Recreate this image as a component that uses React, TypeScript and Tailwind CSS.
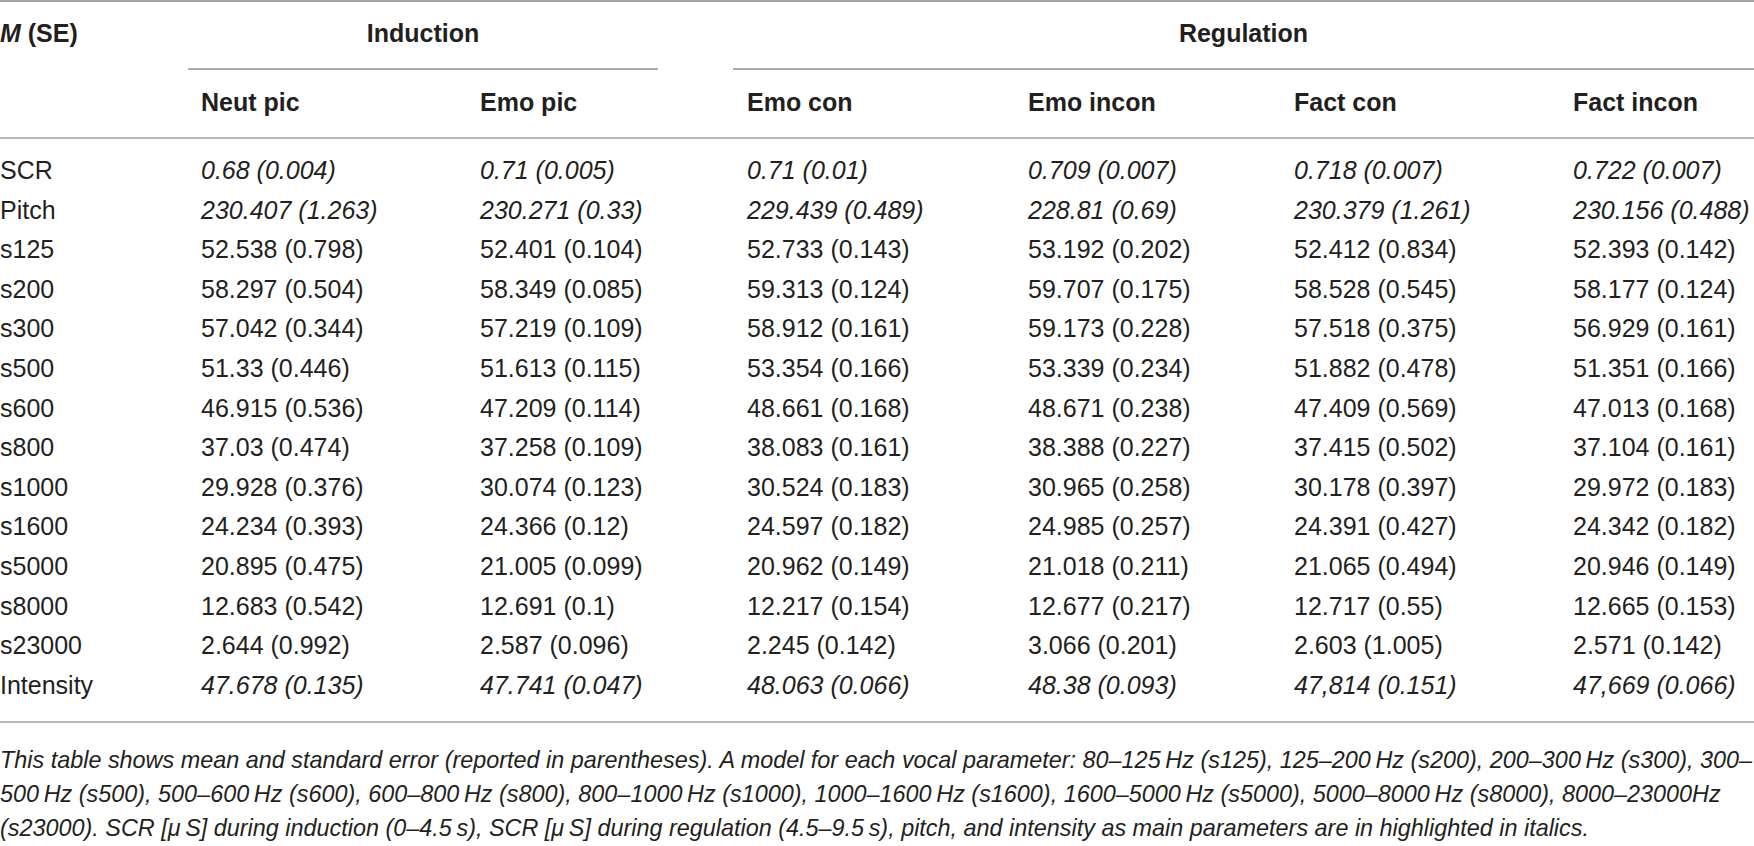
import React from 'react';

type Row = { label: string; italic?: boolean; values: string[] };

const rows: Row[] = [
  { label: 'SCR', italic: true, values: ['0.68 (0.004)', '0.71 (0.005)', '0.71 (0.01)', '0.709 (0.007)', '0.718 (0.007)', '0.722 (0.007)'] },
  { label: 'Pitch', italic: true, values: ['230.407 (1.263)', '230.271 (0.33)', '229.439 (0.489)', '228.81 (0.69)', '230.379 (1.261)', '230.156 (0.488)'] },
  { label: 's125', values: ['52.538 (0.798)', '52.401 (0.104)', '52.733 (0.143)', '53.192 (0.202)', '52.412 (0.834)', '52.393 (0.142)'] },
  { label: 's200', values: ['58.297 (0.504)', '58.349 (0.085)', '59.313 (0.124)', '59.707 (0.175)', '58.528 (0.545)', '58.177 (0.124)'] },
  { label: 's300', values: ['57.042 (0.344)', '57.219 (0.109)', '58.912 (0.161)', '59.173 (0.228)', '57.518 (0.375)', '56.929 (0.161)'] },
  { label: 's500', values: ['51.33 (0.446)', '51.613 (0.115)', '53.354 (0.166)', '53.339 (0.234)', '51.882 (0.478)', '51.351 (0.166)'] },
  { label: 's600', values: ['46.915 (0.536)', '47.209 (0.114)', '48.661 (0.168)', '48.671 (0.238)', '47.409 (0.569)', '47.013 (0.168)'] },
  { label: 's800', values: ['37.03 (0.474)', '37.258 (0.109)', '38.083 (0.161)', '38.388 (0.227)', '37.415 (0.502)', '37.104 (0.161)'] },
  { label: 's1000', values: ['29.928 (0.376)', '30.074 (0.123)', '30.524 (0.183)', '30.965 (0.258)', '30.178 (0.397)', '29.972 (0.183)'] },
  { label: 's1600', values: ['24.234 (0.393)', '24.366 (0.12)', '24.597 (0.182)', '24.985 (0.257)', '24.391 (0.427)', '24.342 (0.182)'] },
  { label: 's5000', values: ['20.895 (0.475)', '21.005 (0.099)', '20.962 (0.149)', '21.018 (0.211)', '21.065 (0.494)', '20.946 (0.149)'] },
  { label: 's8000', values: ['12.683 (0.542)', '12.691 (0.1)', '12.217 (0.154)', '12.677 (0.217)', '12.717 (0.55)', '12.665 (0.153)'] },
  { label: 's23000', values: ['2.644 (0.992)', '2.587 (0.096)', '2.245 (0.142)', '3.066 (0.201)', '2.603 (1.005)', '2.571 (0.142)'] },
  { label: 'Intensity', italic: true, values: ['47.678 (0.135)', '47.741 (0.047)', '48.063 (0.066)', '48.38 (0.093)', '47,814 (0.151)', '47,669 (0.066)'] },
];

const headers = ['Neut pic', 'Emo pic', 'Emo con', 'Emo incon', 'Fact con', 'Fact incon'];

const grid = 'grid grid-cols-[201px_279px_267px_281px_266px_279px_181px]';

export default function App() {
  return (
    <div className="w-[1754px] h-[846px] overflow-hidden bg-white text-[#231f20] font-['Liberation_Sans',Arial,sans-serif] text-[25px] leading-[40px]">
      <div className="border-t-2 border-[#a5a5a5]">
        {/* group headers */}
        <div className="flex font-bold">
          <div className="w-[188px] pt-[11px] whitespace-nowrap">
            <i>M</i> (SE)
          </div>
          <div className="w-[470px] pt-[11px] pb-[15px] text-center border-b-2 border-[#adadad]">Induction</div>
          <div className="w-[75px]" />
          <div className="flex-1 pt-[11px] pb-[15px] text-center border-b-2 border-[#adadad]">Regulation</div>
        </div>

        {/* column headers */}
        <div className={`${grid} font-bold pt-[12px] pb-[15px] border-b-2 border-[#b8b8b8]`}>
          <div />
          {headers.map((h) => (
            <div key={h} className="whitespace-nowrap">{h}</div>
          ))}
        </div>

        {/* body */}
        <div className="pt-[12px] pb-[16px] border-b-2 border-[#b8b8b8]">
          {rows.map((r) => (
            <div key={r.label} className={`${grid} h-[39.6px] leading-[39.6px]`}>
              <div>{r.label}</div>
              {r.values.map((v, i) => (
                <div key={i} className={`whitespace-nowrap ${r.italic ? 'italic' : ''}`}>{v}</div>
              ))}
            </div>
          ))}
        </div>
      </div>

      <div className="mt-[20px] italic text-[23.4px] leading-[34px] whitespace-nowrap">
        <div>This table shows mean and standard error (reported in parentheses). A model for each vocal parameter: 80–125&#8201;Hz (s125), 125–200&#8201;Hz (s200), 200–300&#8201;Hz (s300), 300–</div>
        <div>500&#8201;Hz (s500), 500–600&#8201;Hz (s600), 600–800&#8201;Hz (s800), 800–1000&#8201;Hz (s1000), 1000–1600&#8201;Hz (s1600), 1600–5000&#8201;Hz (s5000), 5000–8000&#8201;Hz (s8000), 8000–23000Hz</div>
        <div>(s23000). SCR [μ&#8201;S] during induction (0–4.5&#8201;s), SCR [μ&#8201;S] during regulation (4.5–9.5&#8201;s), pitch, and intensity as main parameters are in highlighted in italics.</div>
      </div>
    </div>
  );
}
